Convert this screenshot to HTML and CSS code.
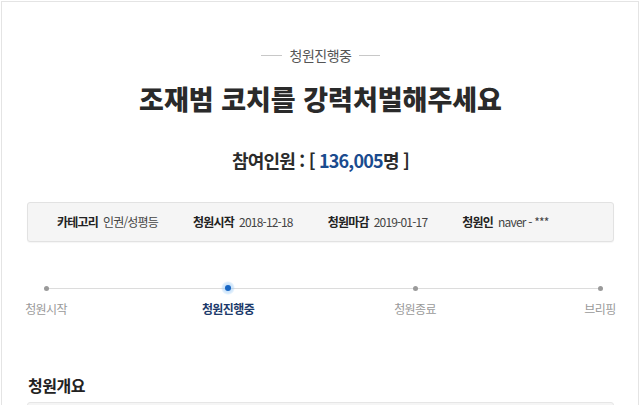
FILE: index.html
```html
<!DOCTYPE html>
<html lang="ko">
<head>
<meta charset="utf-8">
<title>청원진행중</title>
<link rel="stylesheet" href="styles.css">
</head>
<body>
<div class="page">
  <div class="status"><span class="status-line"></span><span class="status-text">청원진행중</span><span class="status-line"></span></div>
  <h1 class="title">조재범 코치를 강력처벌해주세요</h1>
  <h2 class="count">참여인원 : [ <span class="count-num">136,005</span>명 ]</h2>
  <ul class="info">
    <li class="info-item"><strong class="info-label">카테고리</strong><span class="info-value">인권/성평등</span></li>
    <li class="info-item"><strong class="info-label">청원시작</strong><span class="info-value">2018-12-18</span></li>
    <li class="info-item"><strong class="info-label">청원마감</strong><span class="info-value">2019-01-17</span></li>
    <li class="info-item"><strong class="info-label">청원인</strong><span class="info-value">naver - ***</span></li>
  </ul>
  <div class="progress">
    <div class="step"><span class="dot"></span><span class="step-label">청원시작</span></div>
    <div class="step step-active"><span class="dot"></span><span class="step-label">청원진행중</span></div>
    <div class="step"><span class="dot"></span><span class="step-label">청원종료</span></div>
    <div class="step"><span class="dot"></span><span class="step-label">브리핑</span></div>
  </div>
  <h3 class="section-title">청원개요</h3>
  <div class="section-box"></div>
</div>
</body>
</html>
```
FILE: styles.css
```css
html, body {
  margin: 0;
  padding: 0;
  background: #fff;
}
body {
  font-family: "Noto Sans CJK KR", "Noto Sans", sans-serif;
  color: #333;
}
.page {
  box-sizing: border-box;
  width: 638px;
  margin: 1px 0 0 1px;
  border: 1px solid #e4e4e4;
  border-bottom: none;
  padding: 0 24px 0 25px;
}
.status {
  margin-top: 43px;
  height: 20px;
  display: flex;
  align-items: center;
  justify-content: center;
  gap: 8px;
}
.status-line {
  width: 21px;
  height: 1px;
  background: #c8c8c8;
}
.status-text {
  font-size: 14px;
  line-height: 20px;
  color: #555;
  letter-spacing: -0.5px;
}
.title {
  margin: 15px 0 0;
  font-size: 27px;
  line-height: 38px;
  font-weight: 800;
  color: #2a2a2a;
  text-align: center;
  letter-spacing: 0;
}
.count {
  margin: 29px 0 0;
  font-size: 18px;
  line-height: 26px;
  font-weight: 700;
  color: #2b2b2b;
  text-align: center;
  letter-spacing: -0.8px;
}
.count-num {
  color: #1a4b8e;
}
.info {
  list-style: none;
  margin: 29px 0 0;
  padding: 0 0 0 29px;
  height: 40px;
  box-sizing: border-box;
  display: flex;
  align-items: center;
  gap: 35px;
  background: #f5f5f5;
  border: 1px solid #e2e2e2;
  border-radius: 3px;
  box-shadow: 0 1px 1px rgba(0, 0, 0, 0.04);
  font-size: 12px;
  letter-spacing: -0.6px;
}
.info-item {
  display: flex;
  align-items: center;
  gap: 5px;
  line-height: 16px;
}
.info-label {
  font-weight: 700;
  color: #222;
  letter-spacing: -0.8px;
}
.info-value {
  color: #444;
  letter-spacing: -0.8px;
}
.progress {
  margin: 39px 0 0;
  padding: 0 14px 0 19px;
  display: flex;
  background: linear-gradient(#dcdcdc, #dcdcdc) no-repeat;
  background-size: calc(100% - 33px) 1px;
  background-position: 19px 7px;
}
.step {
  width: 0;
  display: flex;
  flex-direction: column;
  align-items: center;
}
.step:nth-child(2) {
  margin-left: 182px;
}
.step:nth-child(3) {
  margin-left: 187px;
}
.step:nth-child(4) {
  margin-left: auto;
}
.dot {
  width: 14px;
  height: 14px;
  display: flex;
  align-items: center;
  justify-content: center;
}
.dot::before {
  content: "";
  width: 5px;
  height: 5px;
  border-radius: 50%;
  background: #9a9a9a;
}
.step-active .dot {
  border-radius: 50%;
  background: radial-gradient(circle, rgba(120, 180, 240, 0.55) 0, rgba(150, 200, 245, 0.35) 55%, rgba(200, 225, 250, 0) 72%);
}
.step-active .dot::before {
  width: 6px;
  height: 6px;
  background: #1766c4;
}
.step-label {
  margin-top: 6px;
  font-size: 12px;
  line-height: 16px;
  color: #9a9a9a;
  white-space: nowrap;
  letter-spacing: -0.6px;
}
.step-active .step-label {
  color: #1c3a6b;
  font-weight: 700;
}
.section-title {
  margin: 57px 0 0 1px;
  font-size: 16px;
  line-height: 22px;
  font-weight: 700;
  color: #222;
  letter-spacing: -0.5px;
}
.section-box {
  margin-top: 6px;
  height: 60px;
  background: #f5f5f5;
  border: 1px solid #e6e6e6;
  border-radius: 3px;
}
```
